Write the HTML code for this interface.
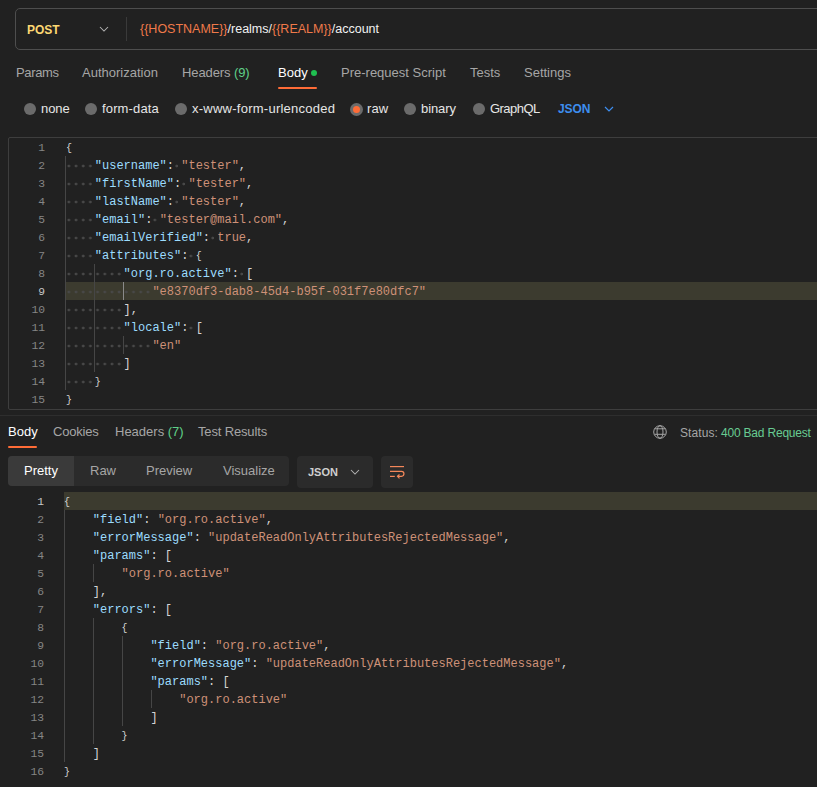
<!DOCTYPE html>
<html><head><meta charset="utf-8">
<style>
*{box-sizing:border-box;margin:0;padding:0}
html,body{width:817px;height:787px;overflow:hidden;background:#212121}
body{position:relative;font-family:"Liberation Sans",sans-serif;color:#e6e6e6}
.a{position:absolute;white-space:pre}
.urlbox{position:absolute;left:15px;top:8px;width:830px;height:42px;border:1px solid #4e4e4e;border-radius:5px}
.tab{position:absolute;white-space:pre;top:64px;font-size:13px;line-height:18px;color:#a6a6a6}
.radio{position:absolute;top:103px;width:12px;height:12px;border-radius:50%;background:#6b6b6b}
.rl{position:absolute;white-space:pre;top:100px;font-size:13px;letter-spacing:0.15px;line-height:18px;color:#e6e6e6}
.ed{position:absolute;left:8px;top:137px;width:830px;height:273px;border:1px solid #3e3e3e;border-radius:2px}
.code{position:absolute;font-family:"Liberation Mono",monospace;font-size:12px;line-height:18px;white-space:pre}
.ln{position:absolute;width:40px;text-align:right;font-family:"Liberation Mono",monospace;font-size:11.3px;line-height:18px;color:#858585}
.k{color:#9cdcfe}.s{color:#ce9178}.p{color:#d4d4d4}.d{display:inline-block;height:18px;vertical-align:top;background:radial-gradient(circle at 2.8px 9px,#484848 0,#484848 1.1px,rgba(72,72,72,0) 1.7px) 0 0/7.2px 18px repeat-x}
.b{font-size:10px;position:relative;top:-0.5px;left:0px}
.g{position:absolute;width:1px;background:#464646}
.hl{position:absolute;height:18px;background:#3c3b2f}
</style></head><body>

<!-- URL bar -->
<div class="urlbox"></div>
<div class="a" style="left:27px;top:22px;font-size:12px;line-height:16px;font-weight:bold;color:#fcd873">POST</div>
<svg class="a" style="left:99px;top:26px" width="10" height="6" viewBox="0 0 10 6"><path d="M1 1 L5 5 L9 1" fill="none" stroke="#b4b4b4" stroke-width="1.05"/></svg>
<div class="a" style="left:126px;top:17px;width:1px;height:24px;background:#3a3a3a"></div>
<div class="a" style="left:140px;top:20px;font-size:12.5px;line-height:18px;color:#f2f2f2"><span style="color:#f07a4a">{{HOSTNAME}}</span>/realms/<span style="color:#f07a4a">{{REALM}}</span>/account</div>

<!-- tabs -->
<div class="tab" style="left:16px;letter-spacing:-0.35px">Params</div>
<div class="tab" style="left:82px">Authorization</div>
<div class="tab" style="left:182px;letter-spacing:-0.1px">Headers <span style="color:#5fd189">(9)</span></div>
<div class="tab" style="left:278px;color:#ffffff">Body</div>
<div class="a" style="left:311px;top:70px;width:6px;height:6px;border-radius:50%;background:#1fbf50"></div>
<div class="a" style="left:278px;top:87px;width:39px;height:2px;background:#ff6c37;border-radius:1px"></div>
<div class="tab" style="left:341px">Pre-request Script</div>
<div class="tab" style="left:470px">Tests</div>
<div class="tab" style="left:524px">Settings</div>

<!-- radios -->
<div class="radio" style="left:24px"></div><div class="rl" style="left:41px;letter-spacing:-0.1px">none</div>
<div class="radio" style="left:85px"></div><div class="rl" style="left:102px">form-data</div>
<div class="radio" style="left:175px"></div><div class="rl" style="left:192px;letter-spacing:0.25px">x-www-form-urlencoded</div>
<div class="radio" style="left:350px;top:103px;width:13px;height:13px;background:#6b6b6b"></div><div class="a" style="left:353px;top:106px;width:7px;height:7px;border-radius:50%;background:#ff6c37"></div><div class="rl" style="left:367px">raw</div>
<div class="radio" style="left:404px"></div><div class="rl" style="left:421px;letter-spacing:-0.1px">binary</div>
<div class="radio" style="left:473px"></div><div class="rl" style="left:490px;letter-spacing:-0.55px">GraphQL</div>
<div class="rl" style="left:558px;top:100px;font-size:12px;letter-spacing:-0.1px;font-weight:bold;color:#3d8ef0">JSON</div>
<svg class="a" style="left:604px;top:106px" width="10" height="6" viewBox="0 0 10 6"><path d="M1 1 L5 5 L9 1" fill="none" stroke="#3d8ef0" stroke-width="1.2"/></svg>

<!-- request editor -->
<div class="ed"></div>
<div class="hl" style="left:66px;top:282px;width:760px"></div>
<!--REQ-->
<div class="ln" style="top:139px;left:5px">1</div>
<div class="code" style="top:139px;left:66px"><span class="p b">{</span></div>
<div class="ln" style="top:157px;left:5px">2</div>
<div class="code" style="top:157px;left:66px"><span class="d">    </span><span class="k">"username"</span><span class="p">:</span><span class="d"> </span><span class="s">"tester"</span><span class="p">,</span></div>
<div class="ln" style="top:175px;left:5px">3</div>
<div class="code" style="top:175px;left:66px"><span class="d">    </span><span class="k">"firstName"</span><span class="p">:</span><span class="d"> </span><span class="s">"tester"</span><span class="p">,</span></div>
<div class="ln" style="top:193px;left:5px">4</div>
<div class="code" style="top:193px;left:66px"><span class="d">    </span><span class="k">"lastName"</span><span class="p">:</span><span class="d"> </span><span class="s">"tester"</span><span class="p">,</span></div>
<div class="ln" style="top:211px;left:5px">5</div>
<div class="code" style="top:211px;left:66px"><span class="d">    </span><span class="k">"email"</span><span class="p">:</span><span class="d"> </span><span class="s">"tester@mail.com"</span><span class="p">,</span></div>
<div class="ln" style="top:229px;left:5px">6</div>
<div class="code" style="top:229px;left:66px"><span class="d">    </span><span class="k">"emailVerified"</span><span class="p">:</span><span class="d"> </span><span class="s">true</span><span class="p">,</span></div>
<div class="ln" style="top:247px;left:5px">7</div>
<div class="code" style="top:247px;left:66px"><span class="d">    </span><span class="k">"attributes"</span><span class="p">:</span><span class="d"> </span><span class="p b">{</span></div>
<div class="ln" style="top:265px;left:5px">8</div>
<div class="code" style="top:265px;left:66px"><span class="d">        </span><span class="k">"org.ro.active"</span><span class="p">:</span><span class="d"> </span><span class="p">[</span></div>
<div class="ln" style="top:283px;left:5px;color:#c6c6c6">9</div>
<div class="code" style="top:283px;left:66px"><span class="d">            </span><span class="s">"e8370df3-dab8-45d4-b95f-031f7e80dfc7"</span></div>
<div class="ln" style="top:301px;left:5px">10</div>
<div class="code" style="top:301px;left:66px"><span class="d">        </span><span class="p">]</span><span class="p">,</span></div>
<div class="ln" style="top:319px;left:5px">11</div>
<div class="code" style="top:319px;left:66px"><span class="d">        </span><span class="k">"locale"</span><span class="p">:</span><span class="d"> </span><span class="p">[</span></div>
<div class="ln" style="top:337px;left:5px">12</div>
<div class="code" style="top:337px;left:66px"><span class="d">            </span><span class="s">"en"</span></div>
<div class="ln" style="top:355px;left:5px">13</div>
<div class="code" style="top:355px;left:66px"><span class="d">        </span><span class="p">]</span></div>
<div class="ln" style="top:373px;left:5px">14</div>
<div class="code" style="top:373px;left:66px"><span class="d">    </span><span class="p b">}</span></div>
<div class="ln" style="top:391px;left:5px">15</div>
<div class="code" style="top:391px;left:66px"><span class="p b">}</span></div>
<div class="g" style="left:65px;top:156px;height:234px"></div>
<div class="g" style="left:94px;top:264px;height:108px"></div>
<div class="g" style="left:123px;top:282px;height:18px;background:#8a8a8a"></div>
<div class="g" style="left:123px;top:336px;height:18px"></div>
<!--/REQ-->

<!-- separator -->
<div class="a" style="left:0;top:415px;width:817px;height:1px;background:#2e2e2e"></div>

<!-- response tabs -->
<div class="tab" style="left:8px;top:423px;color:#ffffff">Body</div>
<div class="a" style="left:8px;top:446px;width:29px;height:2px;background:#ff6c37;border-radius:1px"></div>
<div class="tab" style="left:53px;top:423px;letter-spacing:-0.2px">Cookies</div>
<div class="tab" style="left:115px;top:423px">Headers <span style="color:#5fd189">(7)</span></div>
<div class="tab" style="left:198px;top:423px;letter-spacing:-0.15px">Test Results</div>

<svg class="a" style="left:653px;top:425px" width="14" height="14" viewBox="0 0 14 14"><g fill="none" stroke="#a6a6a6" stroke-width="1"><circle cx="7" cy="7" r="6.3"/><ellipse cx="7" cy="7" rx="3" ry="6.3"/><path d="M1.5 3.8H12.5M1.5 9.3H12.5"/></g></svg>
<div class="tab" style="left:680px;top:423.5px;font-size:12px;letter-spacing:0.1px">Status:</div><div class="tab" style="left:721px;top:423.5px;font-size:12px;letter-spacing:-0.2px;color:#68cc92">400 Bad Request</div>

<!-- segmented -->
<div class="a" style="left:8px;top:456px;width:281px;height:30px;background:#2b2b2b;border-radius:4px"></div>
<div class="a" style="left:8px;top:456px;width:66px;height:30px;background:#3a3a3a;border-radius:4px 0 0 4px"></div>
<div class="tab" style="left:24px;top:462px;color:#ffffff">Pretty</div>
<div class="tab" style="left:90px;top:462px">Raw</div>
<div class="tab" style="left:146px;top:462px">Preview</div>
<div class="tab" style="left:223px;top:462px">Visualize</div>

<div class="a" style="left:297px;top:456px;width:76px;height:32px;background:#2b2b2b;border-radius:4px"></div>
<div class="a" style="left:308px;top:464px;font-size:11px;line-height:16px;font-weight:bold;color:#cfcfcf">JSON</div>
<svg class="a" style="left:350px;top:469px" width="10" height="6" viewBox="0 0 10 6"><path d="M1 1 L5 5 L9 1" fill="none" stroke="#b4b4b4" stroke-width="1.05"/></svg>

<div class="a" style="left:381px;top:456px;width:32px;height:32px;background:#2b2b2b;border-radius:4px"></div>
<svg class="a" style="left:388px;top:464px" width="18" height="16" viewBox="0 0 18 16"><g fill="none" stroke="#f4875a" stroke-width="1.2"><path d="M2 2.6H16"/><path d="M2 7.4H13.5A2.45 2.45 0 0 1 13.5 12.3H9.6"/><path d="M11.5 10.5L9.5 12.3L11.5 14.3"/><path d="M2 12.4H6.8"/></g></svg>

<!-- response editor -->
<div class="hl" style="left:64px;top:492px;width:760px"></div>
<!--RES-->
<div class="ln" style="top:493px;left:4px;color:#c6c6c6">1</div>
<div class="code" style="top:493px;left:64px"><span class="p b">{</span></div>
<div class="ln" style="top:511px;left:4px">2</div>
<div class="code" style="top:511px;left:64px">    <span class="k">"field"</span><span class="p">:</span> <span class="s">"org.ro.active"</span><span class="p">,</span></div>
<div class="ln" style="top:529px;left:4px">3</div>
<div class="code" style="top:529px;left:64px">    <span class="k">"errorMessage"</span><span class="p">:</span> <span class="s">"updateReadOnlyAttributesRejectedMessage"</span><span class="p">,</span></div>
<div class="ln" style="top:547px;left:4px">4</div>
<div class="code" style="top:547px;left:64px">    <span class="k">"params"</span><span class="p">:</span> <span class="p">[</span></div>
<div class="ln" style="top:565px;left:4px">5</div>
<div class="code" style="top:565px;left:64px">        <span class="s">"org.ro.active"</span></div>
<div class="ln" style="top:583px;left:4px">6</div>
<div class="code" style="top:583px;left:64px">    <span class="p">]</span><span class="p">,</span></div>
<div class="ln" style="top:601px;left:4px">7</div>
<div class="code" style="top:601px;left:64px">    <span class="k">"errors"</span><span class="p">:</span> <span class="p">[</span></div>
<div class="ln" style="top:619px;left:4px">8</div>
<div class="code" style="top:619px;left:64px">        <span class="p b">{</span></div>
<div class="ln" style="top:637px;left:4px">9</div>
<div class="code" style="top:637px;left:64px">            <span class="k">"field"</span><span class="p">:</span> <span class="s">"org.ro.active"</span><span class="p">,</span></div>
<div class="ln" style="top:655px;left:4px">10</div>
<div class="code" style="top:655px;left:64px">            <span class="k">"errorMessage"</span><span class="p">:</span> <span class="s">"updateReadOnlyAttributesRejectedMessage"</span><span class="p">,</span></div>
<div class="ln" style="top:673px;left:4px">11</div>
<div class="code" style="top:673px;left:64px">            <span class="k">"params"</span><span class="p">:</span> <span class="p">[</span></div>
<div class="ln" style="top:691px;left:4px">12</div>
<div class="code" style="top:691px;left:64px">                <span class="s">"org.ro.active"</span></div>
<div class="ln" style="top:709px;left:4px">13</div>
<div class="code" style="top:709px;left:64px">            <span class="p">]</span></div>
<div class="ln" style="top:727px;left:4px">14</div>
<div class="code" style="top:727px;left:64px">        <span class="p b">}</span></div>
<div class="ln" style="top:745px;left:4px">15</div>
<div class="code" style="top:745px;left:64px">    <span class="p">]</span></div>
<div class="ln" style="top:763px;left:4px">16</div>
<div class="code" style="top:763px;left:64px"><span class="p b">}</span></div>
<div class="g" style="left:64px;top:510px;height:252px"></div>
<div class="g" style="left:93px;top:564px;height:18px"></div>
<div class="g" style="left:93px;top:618px;height:126px"></div>
<div class="g" style="left:122px;top:636px;height:90px"></div>
<div class="g" style="left:151px;top:690px;height:18px"></div>
<!--/RES-->

</body></html>
